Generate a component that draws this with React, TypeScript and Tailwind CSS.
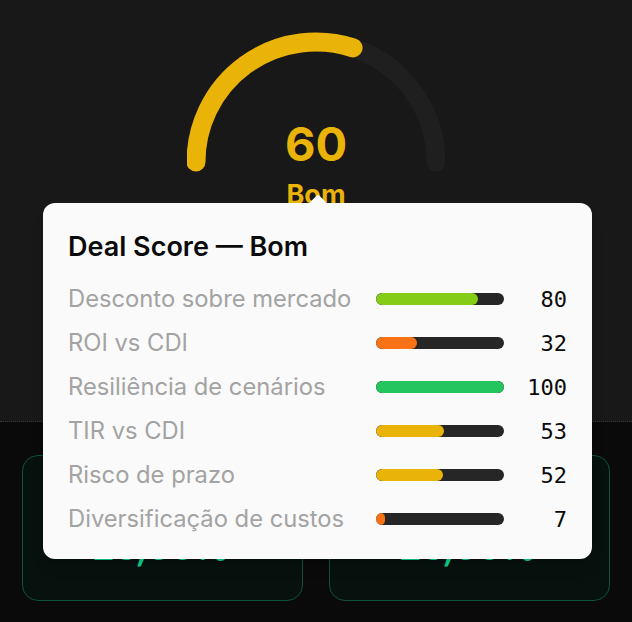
import React from 'react';

interface Factor {
  label: string;
  score: number;
  color: string;
}

const factors: Factor[] = [
  { label: 'Desconto sobre mercado', score: 80, color: 'bg-[#84cc16]' },
  { label: 'ROI vs CDI', score: 32, color: 'bg-[#f97316]' },
  { label: 'Resiliência de cenários', score: 100, color: 'bg-[#22c55e]' },
  { label: 'TIR vs CDI', score: 53, color: 'bg-[#eab308]' },
  { label: 'Risco de prazo', score: 52, color: 'bg-[#eab308]' },
  { label: 'Diversificação de custos', score: 7, color: 'bg-[#f97316]' },
];

const sans = { fontFamily: 'Inter, "Noto Sans", sans-serif' };

// half-circle gauge, 0..100 mapped onto 180 degrees
const Gauge = ({ value }: { value: number }) => {
  const r = 120;
  const cx = 129;
  const cy = 130;
  const a = Math.PI * (1 - value / 100);
  const ex = cx + r * Math.cos(a);
  const ey = cy - r * Math.sin(a);
  return (
    <svg width="258" height="142" viewBox="0 0 258 142" className="block">
      <path
        d={`M ${cx - r} ${cy} A ${r} ${r} 0 0 1 ${cx + r} ${cy}`}
        fill="none"
        stroke="#1f1f1f"
        strokeWidth="19"
        strokeLinecap="round"
      />
      <path
        d={`M ${cx - r} ${cy} A ${r} ${r} 0 0 1 ${ex} ${ey}`}
        fill="none"
        stroke="#eab308"
        strokeWidth="19"
        strokeLinecap="round"
      />
    </svg>
  );
};

const StatCard = ({ value }: { value: string }) => (
  <div className="h-[146px] rounded-[16px] border-[1.5px] border-[#0e5238] bg-[#07110e] flex flex-col items-center justify-end pb-[35px]">
    <span className="text-[36px] leading-none font-semibold italic text-[#0fd38c]">{value}</span>
  </div>
);

export default function App() {
  return (
    <div className="relative w-[632px] h-[622px] bg-[#0a0a0a] overflow-hidden" style={sans}>
      <div className="h-[422px] bg-[#181818] border-b border-dotted border-[#3a3a3a] flex flex-col items-center pt-[32px]">
        <Gauge value={60} />
        <span className="-mt-[54px] text-[47px] leading-none font-bold text-[#eab308]">60</span>
        <span className="mt-[14px] text-[27px] leading-none font-bold text-[#eab308]">Bom</span>
      </div>

      <div className="grid grid-cols-2 gap-[26px] px-[22px] pt-[33px]">
        <StatCard value="25,06%" />
        <StatCard value="25,06%" />
      </div>

      {/* score breakdown tooltip */}
      <div className="absolute left-[43px] top-[203px] w-[549px] rounded-[12px] bg-[#fafafa] px-[25px] pt-[28px] pb-[26px] shadow-lg">
        <div className="absolute left-1/2 -top-[6px] w-[13px] h-[13px] -translate-x-1/2 rotate-45 rounded-[2px] bg-[#fafafa]" />
        <h3 className="text-[27px] leading-[32px] font-semibold text-[#0a0a0a]">Deal Score — Bom</h3>
        <div className="mt-[22px] flex flex-col gap-[16px]">
          {factors.map((f) => (
            <div key={f.label} className="flex items-center h-[28px]">
              <span className="flex-1 text-[23.75px] leading-[28px] text-[#a3a3a3] whitespace-nowrap">{f.label}</span>
              <div className="w-[128px] h-[12px] rounded-full bg-[#262626] overflow-hidden">
                <div className={`h-full rounded-full ${f.color}`} style={{ width: `${f.score}%` }} />
              </div>
              <span
                className="w-[63px] text-right text-[22px] text-[#0a0a0a]"
                style={{ fontFamily: '"DejaVu Sans Mono", monospace' }}
              >
                {f.score}
              </span>
            </div>
          ))}
        </div>
      </div>
    </div>
  );
}
